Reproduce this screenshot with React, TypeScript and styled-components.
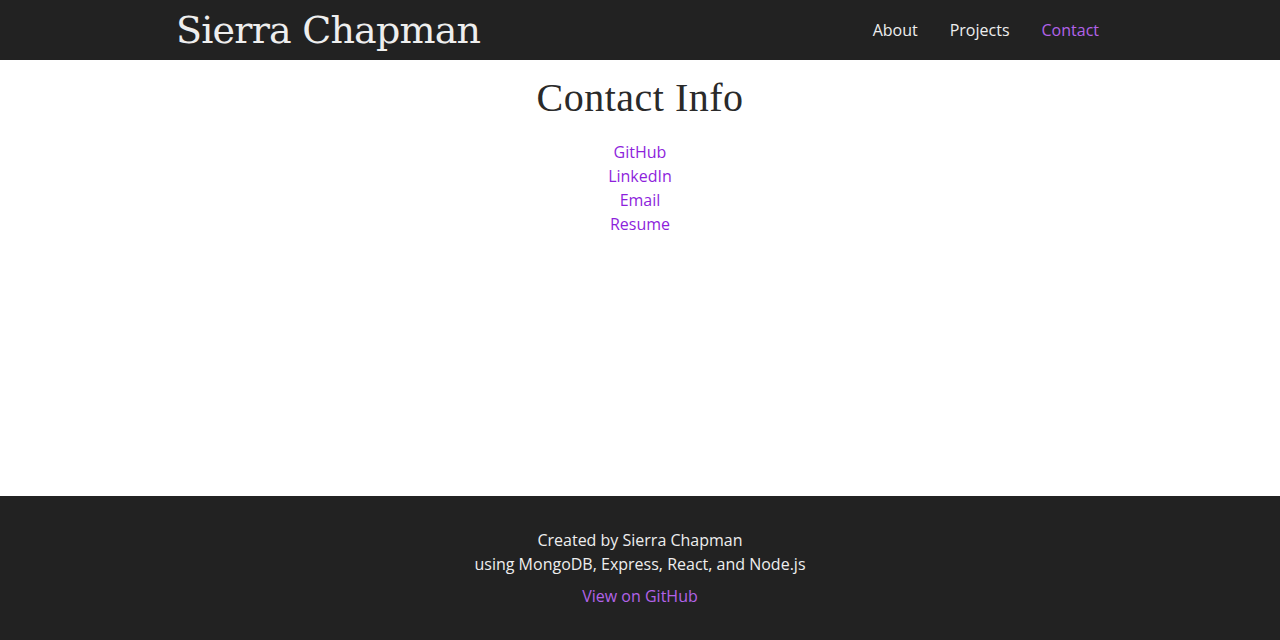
import React from "react"
import styled, { createGlobalStyle } from "styled-components"

const GlobalStyle = createGlobalStyle`
  html, body {
    margin: 0;
    padding: 0;
    background: #fff;
    font-family: "Open Sans", "Noto Sans", sans-serif;
    font-size: 16px;
    line-height: 24px;
  }
  * {
    box-sizing: border-box;
  }
`

const Page = styled.div`
  display: flex;
  flex-direction: column;
  min-height: 640px;
`

const Header = styled.header`
  height: 60px;
  background: #222;
`

const Container = styled.div`
  width: 960px;
  height: 100%;
  margin: 0 auto;
  padding: 0 15px;
  display: flex;
  align-items: center;
  justify-content: space-between;
`

const Brand = styled.a`
  font-family: "DejaVu Serif", "Liberation Serif", serif;
  font-size: 38px;
  line-height: 60px;
  letter-spacing: -0.8px;
  color: #eee;
  text-decoration: none;
  padding-left: 1px;
`

const Nav = styled.nav`
  display: flex;
  margin-right: -10px;
`

const NavLink = styled.a<{ $active?: boolean }>`
  padding: 0 16px;
  font-size: 16px;
  line-height: 60px;
  color: ${(p) => (p.$active ? "#b262e8" : "#eee")};
  text-decoration: none;
`

const Main = styled.main`
  flex: 1;
  display: flex;
  flex-direction: column;
  align-items: center;
  padding-top: 14px;
`

const Heading = styled.h1`
  margin: 0 0 18px;
  font-family: "Liberation Serif", "DejaVu Serif", serif;
  font-weight: 400;
  font-size: 40px;
  line-height: 48px;
  letter-spacing: 0.5px;
  color: #2a2a2a;
`

const LinkList = styled.ul`
  list-style: none;
  margin: 0;
  padding: 0;
  display: flex;
  flex-direction: column;
  align-items: center;
`

const ContactLink = styled.a`
  color: #8e1fdc;
  text-decoration: none;
  font-size: 16px;
  line-height: 24px;
`

const Footer = styled.footer`
  background: #222;
  padding: 32px 0;
  display: flex;
  flex-direction: column;
  align-items: center;
  color: #eee;
  text-align: center;
`

const Credit = styled.p`
  margin: 0 0 8px;
  line-height: 24px;
`

const FooterLink = styled.a`
  color: #b262e8;
  text-decoration: none;
  line-height: 24px;
`

const links = ["GitHub", "LinkedIn", "Email", "Resume"]

export default function App() {
  return (
    <Page>
      <GlobalStyle />
      <Header>
        <Container>
          <Brand href="#">Sierra Chapman</Brand>
          <Nav>
            <NavLink href="#">About</NavLink>
            <NavLink href="#">Projects</NavLink>
            <NavLink href="#" $active>
              Contact
            </NavLink>
          </Nav>
        </Container>
      </Header>
      <Main>
        <Heading>Contact Info</Heading>
        <LinkList>
          {links.map((l) => (
            <li key={l}>
              <ContactLink href="#">{l}</ContactLink>
            </li>
          ))}
        </LinkList>
      </Main>
      <Footer>
        <Credit>
          Created by Sierra Chapman
          <br />
          using MongoDB, Express, React, and Node.js
        </Credit>
        <FooterLink href="#">View on GitHub</FooterLink>
      </Footer>
    </Page>
  )
}
